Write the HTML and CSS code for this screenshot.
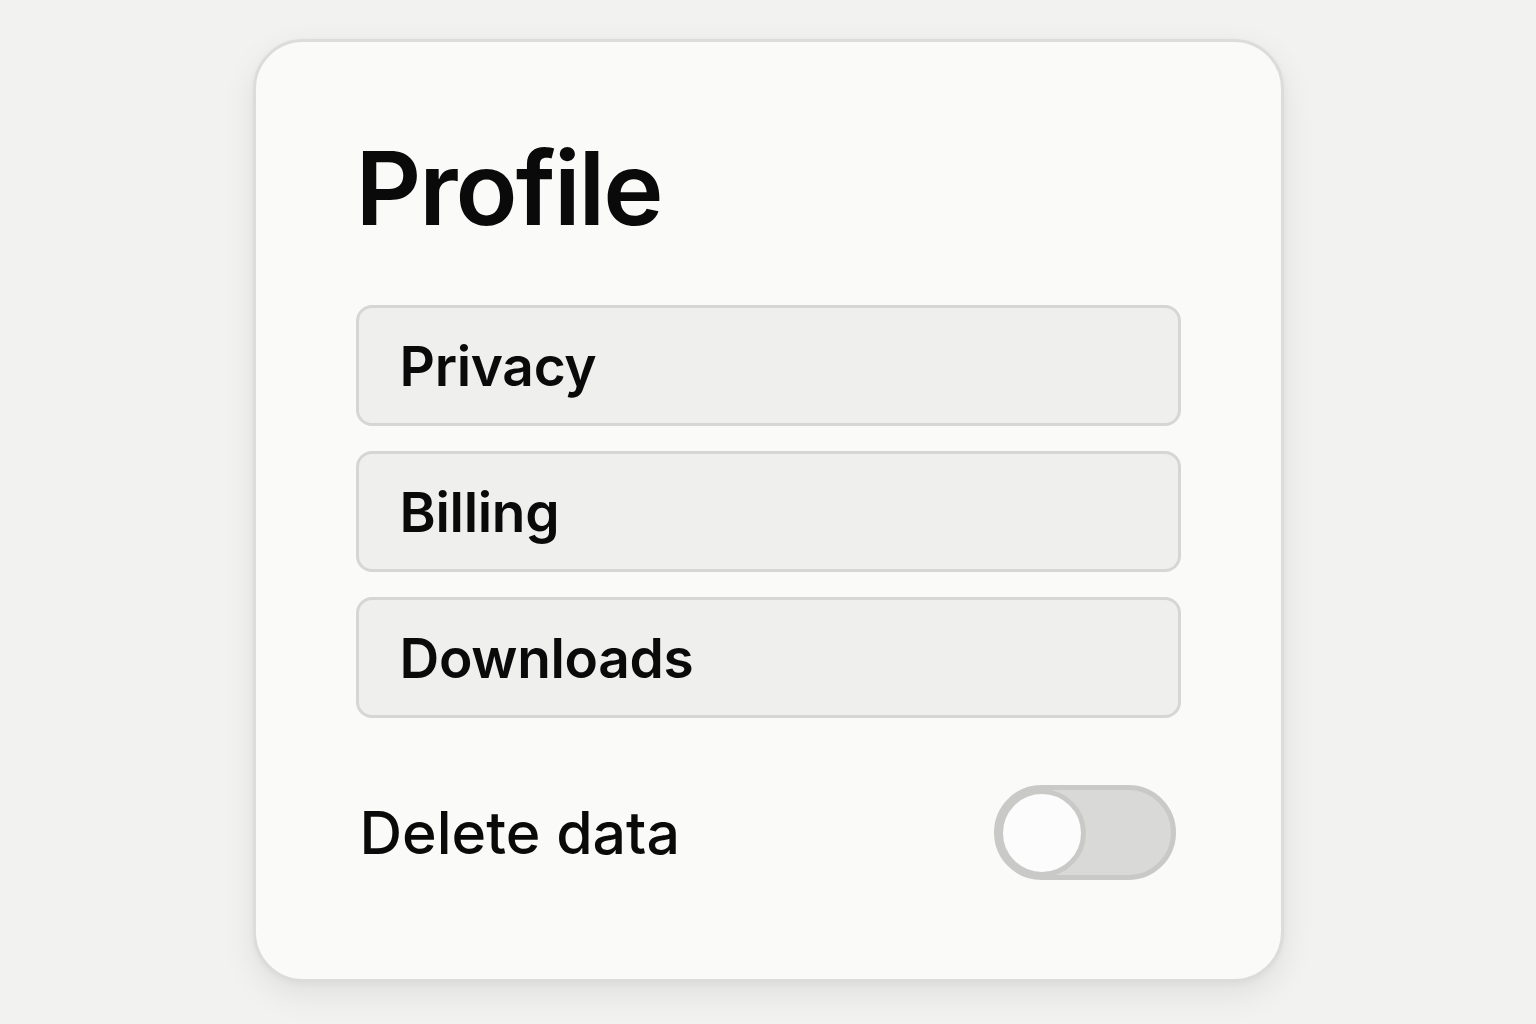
FILE: index.html
```html
<!DOCTYPE html>
<html lang="en">
<head>
<meta charset="utf-8">
<title>Profile</title>
<link rel="stylesheet" href="styles.css">
</head>
<body>
<main class="page">
  <section class="card">
    <h1 class="title">Profile</h1>
    <nav class="menu">
      <button class="menu-item">Privacy</button>
      <button class="menu-item">Billing</button>
      <button class="menu-item">Downloads</button>
    </nav>
    <div class="setting">
      <span class="setting-label">Delete data</span>
      <span class="toggle" role="switch" aria-checked="false"><span class="knob"></span></span>
    </div>
  </section>
</main>
</body>
</html>
```

FILE: styles.css
```css
* { box-sizing: border-box; }
html, body { margin: 0; padding: 0; }
body {
  background: #f2f2f0;
  font-family: Inter, "Noto Sans", "Liberation Sans", sans-serif;
  color: #0a0a0a;
}
.page {
  width: 1536px;
  height: 1024px;
  display: flex;
  justify-content: center;
  align-items: flex-start;
  padding-top: 39px;
}
.card {
  width: 1031px;
  height: 943px;
  background: #fafaf8;
  border: 3px solid #dcdcda;
  border-radius: 50px;
  box-shadow: 0 12px 34px rgba(0,0,0,0.08), 0 2px 6px rgba(0,0,0,0.04);
  padding: 95px 100px 0 100px;
  display: flex;
  flex-direction: column;
}
.title {
  margin: 0 0 66px 0;
  font-size: 102px;
  line-height: 102px;
  font-weight: 600;
  letter-spacing: -2px;
}
.menu {
  display: flex;
  flex-direction: column;
  gap: 25px;
}
.menu-item {
  height: 121px;
  background: #efefee;
  border: 3px solid #d6d6d5;
  border-radius: 16px;
  padding: 0 0 0 41px;
  text-align: left;
  font-family: inherit;
  font-size: 55px;
  font-weight: 600;
  letter-spacing: -0.3px;
  color: #0a0a0a;
  display: flex;
  align-items: center;
}
.setting {
  margin-top: 67px;
  display: flex;
  align-items: center;
  justify-content: space-between;
  padding: 0 5px 0 4px;
}
.setting-label {
  font-size: 59px;
  font-weight: 500;
}
.toggle {
  width: 182px;
  height: 95px;
  border-radius: 48px;
  background: #d9d9d8;
  border: 5px solid #c9c9c8;
  display: flex;
  align-items: center;
}
.knob {
  width: 88px;
  height: 88px;
  margin-left: -1px;
  border-radius: 50%;
  background: #fcfcfc;
  border: 5px solid #c9c9c8;
}
```
